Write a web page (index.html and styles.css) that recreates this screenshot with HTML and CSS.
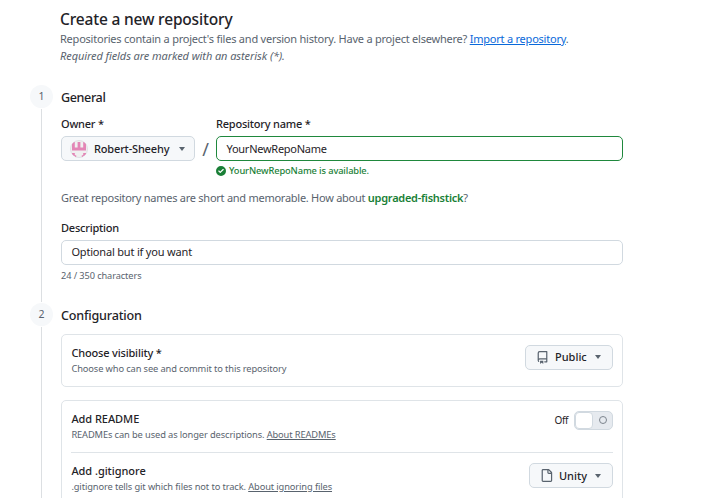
FILE: index.html
```html
<!DOCTYPE html>
<html lang="en">
<head>
<meta charset="utf-8">
<title>Create a new repository</title>
<link rel="stylesheet" href="styles.css">
</head>
<body>
<main class="page">
  <header class="intro">
    <h1>Create a new repository</h1>
    <p class="lead">Repositories contain a project's files and version history. Have a project elsewhere? <a class="import" href="#">Import a repository</a>.</p>
    <p class="required">Required fields are marked with an asterisk (*).</p>
  </header>

  <section class="step step-general">
    <div class="rail"><span class="number">1</span><span class="line"></span></div>
    <div class="content">
      <h2 class="general">General</h2>
      <div class="name-row">
        <div class="owner">
          <div class="label">Owner *</div>
          <button class="button owner-button">
            <svg class="avatar" viewBox="0 0 18 18"><defs><clipPath id="round"><circle cx="9" cy="9" r="8.6"/></clipPath></defs><circle cx="9" cy="9" r="8.5" fill="#f0f0f0" stroke="#dfe1e4"/><path clip-path="url(#round)" fill="#e386b6" d="M2 2h2.8v5.6h2.8V2h2.8v5.6h2.8V2H16v8.4H2zM2 13h2.8v3H2zM13.2 13H16v3h-2.8zM4.8 15.2h1.4V18H4.8zM11.8 15.2h1.4V18h-1.4z"/></svg>
            <span class="owner-name">Robert-Sheehy</span><span class="caret"></span>
          </button>
        </div>
        <div class="slash">/</div>
        <div class="repo">
          <div class="label">Repository name *</div>
          <div class="input valid">YourNewRepoName</div>
          <div class="available"><svg viewBox="0 0 12 12"><path fill="#1a7f37" fill-rule="evenodd" d="M6 12A6 6 0 1 0 6 0a6 6 0 0 0 0 12Zm3.1-7.3-3.5 3.5a.7.7 0 0 1-1 0L2.9 6.5a.7.7 0 0 1 1-1l1.2 1.2 3-3a.7.7 0 0 1 1 1Z"/></svg><span>YourNewRepoName is available.</span></div>
        </div>
      </div>
      <p class="hint">Great repository names are short and memorable. How about <b>upgraded-fishstick</b>?</p>
      <div class="label">Description</div>
      <div class="input description">Optional but if you want</div>
      <div class="count">24 / 350 characters</div>
    </div>
  </section>

  <section class="step step-config">
    <div class="rail"><span class="number">2</span><span class="line"></span></div>
    <div class="content">
      <h2>Configuration</h2>
      <div class="card visibility">
        <div class="setting">
          <div><div class="name tight">Choose visibility *</div><div class="detail">Choose who can see and commit to this repository</div></div>
          <button class="button public"><svg class="icon" viewBox="0 0 16 16"><path d="M2 2.5A2.5 2.5 0 0 1 4.5 0h8.75a.75.75 0 0 1 .75.75v12.5a.75.75 0 0 1-.75.75h-2.5a.75.75 0 0 1 0-1.5h1.75v-2h-8a1 1 0 0 0-.714 1.7.75.75 0 1 1-1.072 1.05A2.495 2.495 0 0 1 2 11.5Zm10.5-1h-8a1 1 0 0 0-1 1v6.708A2.486 2.486 0 0 1 4.5 9h8ZM5 12.25a.25.25 0 0 1 .25-.25h3.5a.25.25 0 0 1 .25.25v3.25a.25.25 0 0 1-.4.2l-1.45-1.087a.249.249 0 0 0-.3 0L5.4 15.7a.25.25 0 0 1-.4-.2Z"/></svg><span>Public</span><span class="caret"></span></button>
        </div>
      </div>
      <div class="card extras">
        <div class="setting readme">
          <div><div class="name">Add README</div><div class="detail">READMEs can be used as longer descriptions. <a href="#">About READMEs</a></div></div>
          <div class="toggle"><span class="off">Off</span><span class="track"><span class="knob"></span><span class="ring"></span></span></div>
        </div>
        <div class="setting gitignore">
          <div><div class="name">Add .gitignore</div><div class="detail">.gitignore tells git which files not to track. <a href="#">About ignoring files</a></div></div>
          <button class="button unity"><svg class="icon" viewBox="0 0 16 16"><path d="M2 1.75C2 .784 2.784 0 3.75 0h6.586c.464 0 .909.184 1.237.513l2.914 2.914c.329.328.513.773.513 1.237v9.586A1.75 1.75 0 0 1 13.25 16h-9.5A1.75 1.75 0 0 1 2 14.25Zm1.75-.25a.25.25 0 0 0-.25.25v12.5c0 .138.112.25.25.25h9.5a.25.25 0 0 0 .25-.25V6h-2.75A1.75 1.75 0 0 1 9 4.25V1.5Zm6.75.062V4.25c0 .138.112.25.25.25h2.688l-.011-.013-2.914-2.914-.013-.011Z"/></svg><span>Unity</span><span class="caret"></span></button>
        </div>
      </div>
    </div>
  </section>
</main>
</body>
</html>
```
FILE: styles.css
```css
* { box-sizing: border-box; }
body { margin: 0; background: #fff; color: #1f2328; font: 11px/16px "Noto Sans", sans-serif; overflow: hidden; }
h1, h2, p { margin: 0; }
.page { width: 623px; height: 498px; padding: 8px 0 0 30px; overflow: hidden; }
.intro { height: 77px; padding-left: 30px; color: #59636e; }
h1 { color: #1f2328; font-size: 15.5px; font-weight: 500; line-height: 22px; letter-spacing: -0.18px; }
.lead, .required { line-height: 17px; white-space: nowrap; }
.lead { letter-spacing: -0.225px; }
.required { font-style: italic; letter-spacing: -0.08px; }
.import { color: #0969da; text-underline-offset: 1px; }
.step { display: grid; grid-template-columns: 23px 562px; column-gap: 8px; }
.step-general { height: 218px; }
.step-config { height: 260px; }
.rail { display: flex; flex-direction: column; align-items: center; }
.number { flex: none; width: 23px; height: 23px; border-radius: 50%; background: #f6f8fa; color: #59636e; font-size: 10.5px; line-height: 22px; text-align: center; }
.line { flex: 1; width: 1px; margin: 1px 0; background: #dcdfe2; }
h2 { height: 31px; font-size: 12.6px; font-weight: 500; line-height: 25px; letter-spacing: -0.2px; }
h2.general { letter-spacing: -0.4px; }
.label { height: 20px; font-weight: 500; line-height: 16px; letter-spacing: -0.22px; }
.name-row { display: flex; height: 74px; }
.owner { width: 134px; }
.slash { width: 21px; padding: 20px 0 0; font-size: 18px; line-height: 26px; text-align: center; color: #59636e; }
.repo { flex: 1; }
.button { display: flex; align-items: center; height: 25px; margin: 0; padding: 0 11px 0 8px; border: 1px solid #d1d9e0; border-radius: 5px; background: #f6f8fa; color: #1f2328; font: 500 11px/16px "Noto Sans", sans-serif; }
.owner-button { width: 134px; padding-right: 9px; }
.owner-name { letter-spacing: -0.17px; }
.avatar { width: 18px; height: 18px; margin-right: 6px; }
.caret { margin-left: auto; border: 3px solid transparent; border-top: 4px solid #59636e; border-bottom: 0; }
.input { height: 25px; padding: 0 9px; border: 1px solid #d1d9e0; border-radius: 5px; line-height: 23px; letter-spacing: -0.18px; }
.input.description { padding-left: 9.4px; line-height: 21px; }
.input.valid { padding-left: 9.5px; border-color: #1f883d; letter-spacing: -0.26px; }
.available { display: flex; align-items: center; gap: 3px; height: 18px; padding-top: 2px; color: #1a7f37; font-size: 9.3px; font-weight: 500; letter-spacing: -0.12px; }
.available svg { width: 10px; height: 10px; }
.hint { height: 30px; color: #59636e; line-height: 16px; letter-spacing: -0.26px; }
.hint b { color: #1a7f37; font-weight: 600; }
.count { padding-top: 3px; color: #59636e; font-size: 9.2px; letter-spacing: -0.08px; }
.card { border: 1px solid #dfe4e8; border-radius: 5px; padding: 0 9px; }
.visibility { height: 53px; margin-bottom: 13px; }
.extras { height: 150px; }
.setting { display: flex; justify-content: space-between; height: 52px; padding-top: 10px; }
.readme { border-bottom: 1px solid #dfe4e8; }
.name { padding-left: 0.4px; font-weight: 500; line-height: 16px; letter-spacing: -0.04px; }
.name.tight { letter-spacing: -0.17px; }
.detail { padding-left: 0.4px; color: #59636e; font-size: 9.3px; line-height: 15px; letter-spacing: -0.115px; }
.detail a { color: inherit; }
.icon { width: 13px; height: 13px; margin-right: 6px; fill: #59636e; }
.public { width: 88px; padding-left: 10px; padding-bottom: 1px; }
.unity { width: 84px; padding-left: 10px; }
.toggle { display: flex; height: 19px; gap: 6px; font-size: 10px; line-height: 18px; letter-spacing: -0.4px; }
.track { display: flex; width: 39px; height: 19px; border: 1px solid #d1d9e0; border-radius: 5px; background: #e6eaef; }
.knob { width: 18px; height: 17px; border: 1px solid #d1d9e0; border-radius: 4px; background: #fff; }
.ring { width: 8px; height: 8px; margin: 4px 0 0 6px; border: 1px solid #7d858e; border-radius: 50%; }
```
